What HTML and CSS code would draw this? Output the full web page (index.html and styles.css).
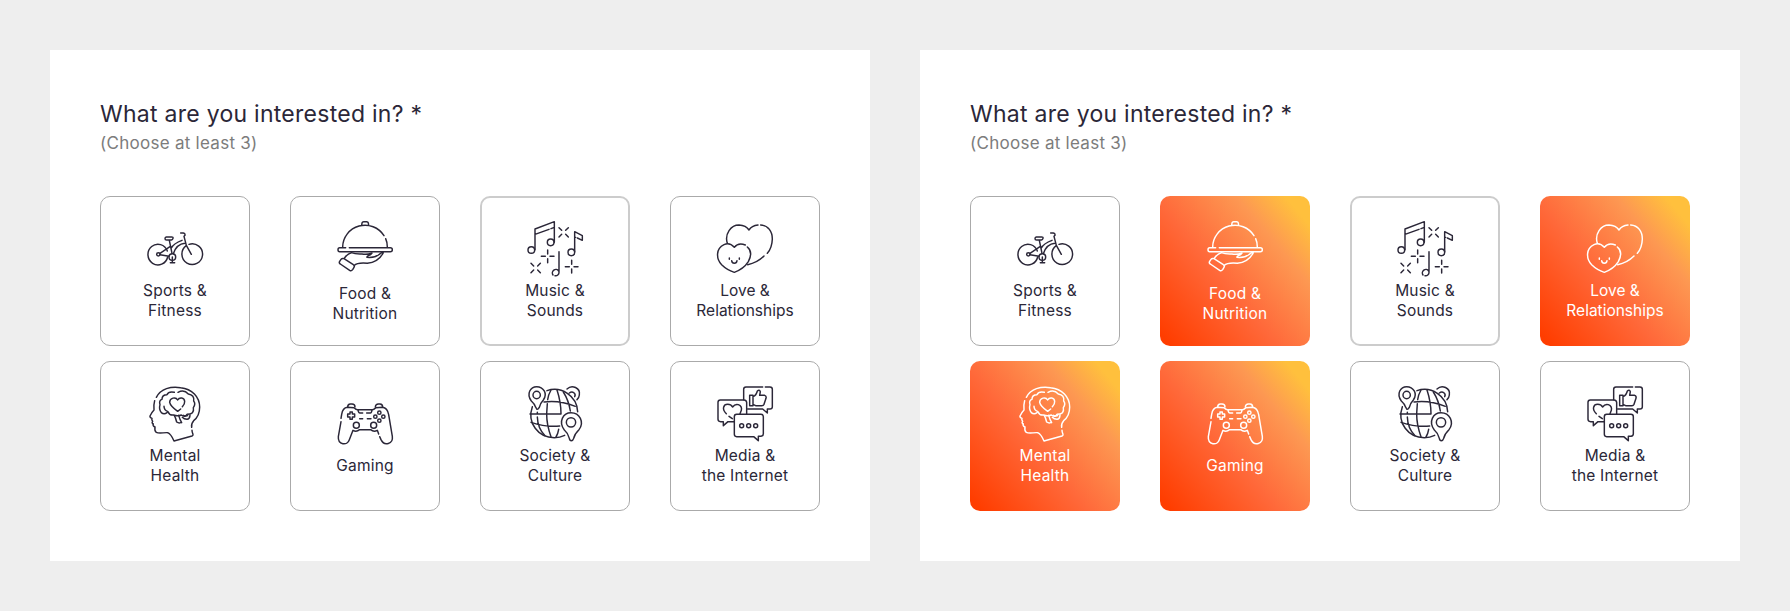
FILE: index.html
```html
<!DOCTYPE html>
<html lang="en">
<head>
<meta charset="utf-8">
<title>Interests</title>
<link rel="stylesheet" href="styles.css">
</head>
<body>
<svg class="sprite" aria-hidden="true">
  <symbol id="bike" viewBox="156 92 168 168">
    <path d="M217 182A30 31 0 1 0 218 200M274 166A31 31 0 1 0 282 162"/>
    <circle cx="190" cy="192" r="5"/><circle cx="232" cy="200" r="10"/>
    <path d="M214 140h16q5 0 4 4t-5 5h-14q-5 0-5-4t4-5zM223 150l8 39M195 189l31-21M195 193l27 5M228 174q8-15 33-24M235 190q10-29 35-31M257 128h8q6 1 5 7l-3 3l7 27l15 27M232 200v17M226 217h13"/>
  </symbol>
  <symbol id="food" viewBox="156 92 168 168">
    <path d="M230 105l1-7q1-4 5-4h9q4 0 5 4l1 7M173 170A67 66 0 0 1 297 136M302 145Q307 156 307 170M182 172h-18q-5 0-5 6t5 6h152q6 0 6-6t-6-6H193"/>
    <path d="M177 205q-6-2-9 2l-4 6q-3 5 2 8l28 19q5 3 9-2l4-7q3-5-2-8zM177 205q10-15 22-18q12 5 32 4q14 3 30-3q-4 6-11 8q-5 3-4 5q26 3 43-14h6q-14 28-48 32q-29-3-40 7"/>
  </symbol>
  <symbol id="music" viewBox="156 92 168 168">
    <circle cx="169" cy="179" r="10"/><circle cx="227" cy="156" r="10"/><circle cx="289" cy="186" r="10"/>
    <path d="M180 178v-62l58-22v62M180 132l42-15M228 115l10-4M299 184v-60l23 12v14l-15-7M299 140l3 1M252 184v61M252 246a10 10 0 0 1-12 10M234 254a10 10 0 1 1 17-12"/>
    <path d="M252 112l8 8M280 112l-8 8M252 140l8-8M280 140l-8-8M168 219l8 8M196 219l-8 8M168 247l8-8M196 247l-8-8M218 179v12M218 205v12M199 198h12M225 198h12M290 210v12M290 236v12M271 229h12M297 229h12"/>
  </symbol>
  <symbol id="hearts" viewBox="156 92 168 168">
    <path d="M187 159C178 130 198 104 222 104q21 1 30 15q8-13 27-15M287 104c23 1 35 20 35 42q-1 27-15 43M297 197q-20 20-49 26"/>
    <path d="M241 164q-21-9-33 7q-14-16-31-8c-25 12-24 42-7 60q15 15 38 23q28-10 42-32c9-17 9-34-3-44M200 211q1 8 8 8t8-8M193 203v4M223 203v4"/>
  </symbol>
  <symbol id="mind" viewBox="156 92 168 168">
    <path d="M184 126c13-26 44-34 73-29c34 3 57 28 57 58q0 27-18 41q-8 9-6 20M291 225q0 6 3 12q1 3-3 5l-54 15q-9-21-19-25c-12-1-25 4-34-1q-6-4-4-16q-8-4-5-9q-6-3-2-8q-4-4-2-9q-7-2-6-7q6-12 12-18q-2-13 2-28"/>
    <path d="M238 111q-17-4-22 7q-15 0-15 14q-10 3-6 16q-4 14 4 24q8 7 17 0M207 153q0 12 12 16q5 12 17 10q12 5 23 0q12 8 17-2q23 0 19-20q8-12 1-20q3-18-16-21q-13-15-31-5"/>
    <path d="M262 154q8-9 7-16c-1-12-16-13-21-4c-6-11-24-6-24 7q2 11 24 27l9-7M238 181q4 6 7 19q6 4 12 2M251 180q4 14 9 22M262 186q5 6 14 6q8-1 9-12M265 180q6 4 13 1"/>
  </symbol>
  <symbol id="gaming" viewBox="156 92 168 168">
    <path d="M168 199l-8 45c-2 25 27 28 33 9l11-28q10 6 20-2h33q9 8 20 2l4 11M284 244l4 9c10 21 37 13 34-10l-11-65q-4-20-18-22l-20 1q-8 7-12 6h-42q-5 1-12-6l-20-1q-14 2-17 21l-2 12"/>
    <path d="M188 156q0-10 8-10h5q9 0 9 9M271 155q1-9 9-9h5q8 0 8 10M219 163q1 10 6 10h8M245 173h11q4 0 5-10M224 190h9M247 190h11M195 170h7v6h7v9h-7v7h-7v-7h-7v-9h7z"/>
    <circle cx="214" cy="210" r="9"/><circle cx="266" cy="210" r="9"/><circle cx="283" cy="172" r="5"/><circle cx="271" cy="184" r="5"/><circle cx="295" cy="184" r="5"/><circle cx="283" cy="196" r="5"/>
  </symbol>
  <symbol id="globe" viewBox="156 92 168 168">
    <path d="M186 162l-5-8q-2-8-12-17c-16-23-2-43 16-43c20 0 34 21 20 40q-10 11-12 22q-4 7-7 6z"/><circle cx="185" cy="119" r="11"/>
    <path d="M289 256q-5 0-6-7q-4-16-15-25c-19-26-3-52 20-52c26 0 41 29 24 51q-13 12-16 26q-2 7-7 7z"/><circle cx="288" cy="201" r="14"/>
    <path d="M276 101c15-15 41-3 37 18q-1 9-7 14M283 113c10-8 21 2 16 11M172 154c-17 49 18 93 66 93q17 0 31-7M216 106c42-15 90 15 92 63"/>
    <path d="M228 104q-8 14-10 29M217 145l-2 30M187 171v5h71q0-36-12-72M165 176h22M265 110q16 25 21 57M207 140q47-6 94 13M187 185q1 34 23 56M215 176q0 33 13 68M251 222q-2 13-8 23M168 201q45 15 86 11"/>
  </symbol>
  <symbol id="media" viewBox="156 92 168 168">
    <path d="M293 95h-50q-7 0-7 7v31M301 95h14q7 0 7 7v52q0 7-7 7h-8v12l-14-12h-45"/>
    <path d="M254 120h10v31h-10zM264 124q10-4 13-17q6-5 9 2l-2 11h15q6 2 4 9l-6 18q-2 4-6 4h-19l-8-4"/>
    <path d="M207 199h-18l-14 12v-12h-8q-8 0-8-7v-51q0-7 7-7h71q7 0 8 7v35M184 175c-15-14-8-28 4-28q10 0 15 8q7-10 17-7q12 5 9 17l-4 10M192 183l10 7"/>
    <path d="M215 177h73q7 0 7 7v51q0 7-7 8h-8v13l-14-12h-51q-7 0-7-7v-53q0-7 7-7z"/><circle cx="230" cy="211" r="6"/><circle cx="251" cy="211" r="6"/><circle cx="272" cy="211" r="6"/>
  </symbol>
</svg>
<main class="board">
  <section class="panel">
    <h2 class="title">What are you interested in? *</h2>
    <p class="hint">(Choose at least 3)</p>
    <div class="grid">
      <div class="card"><svg class="icon"><use href="#bike"/></svg><span class="label">Sports &amp;<br>Fitness</span></div>
      <div class="card card-low"><svg class="icon"><use href="#food"/></svg><span class="label">Food &amp;<br>Nutrition</span></div>
      <div class="card card-hover"><svg class="icon"><use href="#music"/></svg><span class="label">Music &amp;<br>Sounds</span></div>
      <div class="card"><svg class="icon"><use href="#hearts"/></svg><span class="label label-long">Love &amp;<br>Relationships</span></div>
      <div class="card"><svg class="icon"><use href="#mind"/></svg><span class="label">Mental<br>Health</span></div>
      <div class="card card-single"><svg class="icon"><use href="#gaming"/></svg><span class="label">Gaming</span></div>
      <div class="card"><svg class="icon"><use href="#globe"/></svg><span class="label">Society &amp;<br>Culture</span></div>
      <div class="card"><svg class="icon"><use href="#media"/></svg><span class="label">Media &amp;<br>the Internet</span></div>
    </div>
  </section>
  <section class="panel">
    <h2 class="title">What are you interested in? *</h2>
    <p class="hint">(Choose at least 3)</p>
    <div class="grid">
      <div class="card"><svg class="icon"><use href="#bike"/></svg><span class="label">Sports &amp;<br>Fitness</span></div>
      <div class="card card-low selected"><svg class="icon"><use href="#food"/></svg><span class="label">Food &amp;<br>Nutrition</span></div>
      <div class="card card-hover"><svg class="icon"><use href="#music"/></svg><span class="label">Music &amp;<br>Sounds</span></div>
      <div class="card selected"><svg class="icon"><use href="#hearts"/></svg><span class="label label-long">Love &amp;<br>Relationships</span></div>
      <div class="card selected"><svg class="icon"><use href="#mind"/></svg><span class="label">Mental<br>Health</span></div>
      <div class="card card-single selected"><svg class="icon"><use href="#gaming"/></svg><span class="label">Gaming</span></div>
      <div class="card"><svg class="icon"><use href="#globe"/></svg><span class="label">Society &amp;<br>Culture</span></div>
      <div class="card"><svg class="icon"><use href="#media"/></svg><span class="label">Media &amp;<br>the Internet</span></div>
    </div>
  </section>
</main>
</body>
</html>
```
FILE: styles.css
```css
* { box-sizing: border-box; }
body {
  margin: 0;
  background: #eee;
  color: #2b2738;
  font-family: Inter, "Open Sans", sans-serif;
  font-weight: 400;
}
.sprite { display: none; }
.board {
  display: flex;
  gap: 50px;
  padding: 50px;
  height: 611px;
}
.panel {
  width: 820px;
  height: 511px;
  padding: 50px;
  background: #fff;
}
.title {
  margin: 0;
  font-size: 23px;
  font-weight: 400;
  line-height: 28px;
  letter-spacing: 0.27px;
  white-space: nowrap;
}
.hint {
  margin: 4px 0 0;
  font-size: 17px;
  line-height: 22px;
  letter-spacing: 0.27px;
  color: #7c7c7c;
}
.grid {
  display: grid;
  grid-template-columns: repeat(4, 150px);
  grid-auto-rows: 150px;
  gap: 15px 40px;
  margin-top: 42px;
}
.card {
  display: flex;
  flex-direction: column;
  align-items: center;
  padding-top: 24px;
  border: 1px solid #aaa;
  border-radius: 10px;
}
.card-hover {
  padding-top: 23px;
  border: 2px solid #ccc;
}
.icon {
  width: 56px;
  height: 56px;
  flex: none;
  overflow: visible;
  fill: none;
  stroke: currentColor;
  stroke-width: 4.4;
  stroke-linecap: round;
  stroke-linejoin: round;
}
symbol { overflow: visible; }
.label {
  margin-top: 4px;
  font-size: 15.5px;
  line-height: 20px;
  letter-spacing: 0.2px;
  text-align: center;
  white-space: nowrap;
}
.label-long { letter-spacing: 0; }
.card-low .label { margin-top: 7px; }
.card-single .label { margin-top: 14px; }
.selected {
  border: 0;
  padding-top: 25px;
  color: #fff;
  background: linear-gradient(50deg, #ff3d00 4%, #ff693a 43%, #fd9852 73%, #ffc03d 91%);
}
```
